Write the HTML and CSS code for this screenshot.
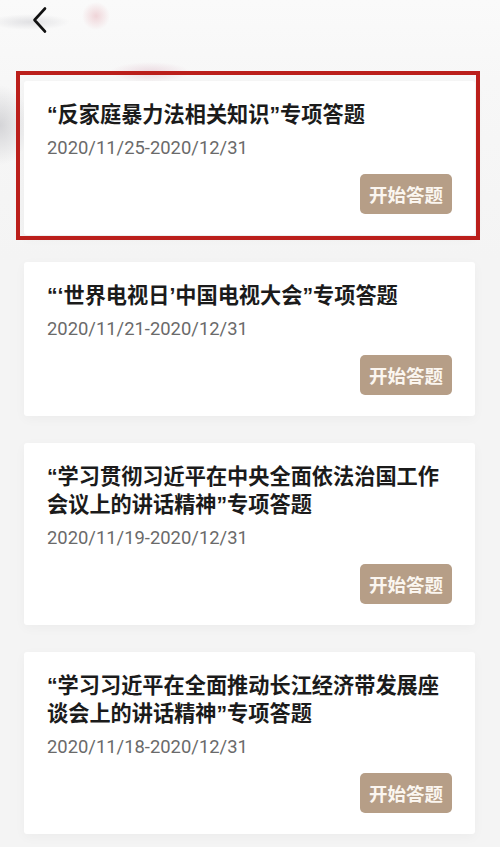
FILE: index.html
```html
<!DOCTYPE html>
<html lang="zh-CN">
<head>
<meta charset="utf-8">
<title>专项答题</title>
<link rel="stylesheet" href="styles.css">
</head>
<body>
<div class="page">
  <header class="topbar">
    <svg class="back" width="16" height="28" viewBox="0 0 16 28" aria-label="返回">
      <path d="M13 2.5 L2.5 14 L13 25.5" fill="none" stroke="#111" stroke-width="2.6" stroke-linecap="round" stroke-linejoin="round"/>
    </svg>
  </header>
  <main class="list">
    <section class="card highlight">
      <h2 class="title">“反家庭暴力法相关知识”专项答题</h2>
      <p class="date">2020/11/25-2020/12/31</p>
      <div class="actions"><button class="start">开始答题</button></div>
    </section>
    <section class="card">
      <h2 class="title">“‘世界电视日’中国电视大会”专项答题</h2>
      <p class="date">2020/11/21-2020/12/31</p>
      <div class="actions"><button class="start">开始答题</button></div>
    </section>
    <section class="card">
      <h2 class="title">“学习贯彻习近平在中央全面依法治国工作会议上的讲话精神”专项答题</h2>
      <p class="date">2020/11/19-2020/12/31</p>
      <div class="actions"><button class="start">开始答题</button></div>
    </section>
    <section class="card">
      <h2 class="title">“学习习近平在全面推动长江经济带发展座谈会上的讲话精神”专项答题</h2>
      <p class="date">2020/11/18-2020/12/31</p>
      <div class="actions"><button class="start">开始答题</button></div>
    </section>
  </main>
</div>
</body>
</html>
```
FILE: styles.css
```css
html, body {
  margin: 0;
  padding: 0;
}
body {
  width: 500px;
  height: 847px;
  overflow: hidden;
  background-color: #f4f4f4;
  background-image:
    radial-gradient(circle at 96px 16px, rgba(236, 200, 205, 0.75) 0, rgba(236, 200, 205, 0) 14px),
    radial-gradient(ellipse 40px 10px at 150px 72px, rgba(230, 205, 215, 0.7) 0, rgba(230, 205, 215, 0) 100%),
    radial-gradient(ellipse 40px 8px at 30px 22px, rgba(200, 200, 205, 0.5) 0, rgba(200, 200, 205, 0) 100%),
    radial-gradient(ellipse 30px 40px at 0px 125px, rgba(190, 190, 195, 0.6) 0, rgba(190, 190, 195, 0) 100%),
    linear-gradient(#fafafa 0, #f7f7f7 80px, #f4f4f4 260px);
  font-family: "Noto Sans CJK SC", "Noto Sans", sans-serif;
}
.page {
  display: flex;
  flex-direction: column;
}
.topbar {
  height: 44px;
  display: flex;
  align-items: center;
  padding-left: 32px;
  box-sizing: border-box;
}
.back {
  display: block;
  margin-top: -4px;
}
.list {
  display: flex;
  flex-direction: column;
  gap: 27px;
  padding: 37px 25px 0 24px;
}
.card {
  position: relative;
  background: #ffffff;
  border-radius: 3px;
  padding: 20px 23px 21px;
  box-shadow: 0 3px 12px rgba(0, 0, 0, 0.035);
}
.highlight::after {
  content: "";
  position: absolute;
  top: -10px;
  left: -8px;
  right: -5px;
  bottom: -5px;
  border: 4px solid #bb1f1b;
  pointer-events: none;
}
.title {
  margin: 0;
  font-family: "Liberation Sans", "Noto Sans CJK SC", sans-serif;
  font-size: 21.2px;
  line-height: 28px;
  font-weight: 700;
  color: #1b1b1b;
}
.date {
  margin: 7px 0 0;
  font-family: Roboto, "Liberation Sans", sans-serif;
  font-size: 18.4px;
  line-height: 24px;
  color: #6a6a6a;
}
.actions {
  display: flex;
  justify-content: flex-end;
  margin-top: 14px;
}
.start {
  width: 92px;
  height: 40px;
  padding: 0;
  border: none;
  border-radius: 5px;
  background: #b69e87;
  color: #fbf6f0;
  font-family: "Noto Sans CJK SC", sans-serif;
  font-size: 18.5px;
  font-weight: 700;
  line-height: 40px;
}
```
